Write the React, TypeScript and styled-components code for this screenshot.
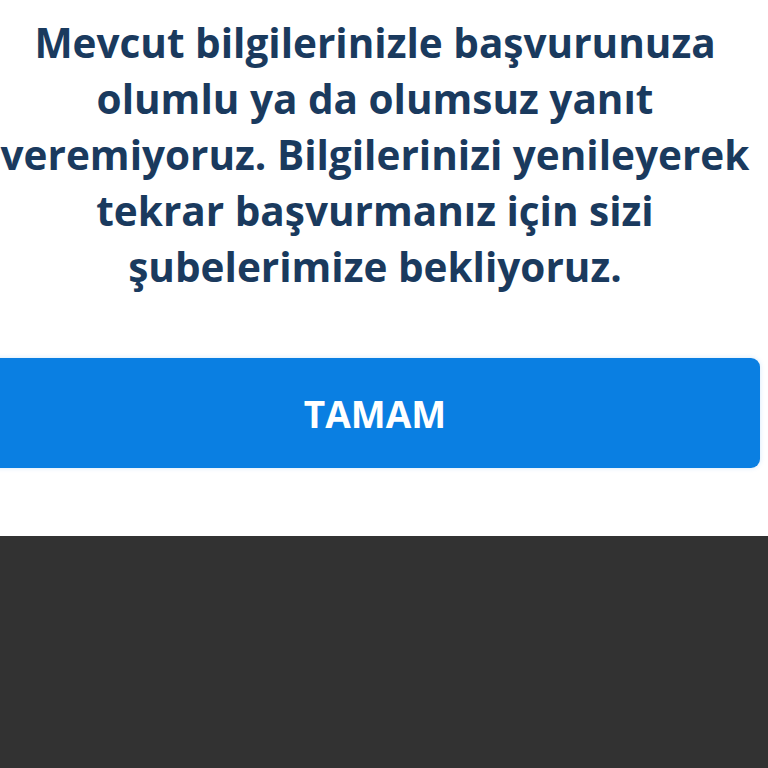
import React from 'react';
import styled, {createGlobalStyle} from "styled-components";

const GlobalStyle = createGlobalStyle`
    html, body {
        margin: 0;
        padding: 0;
        background: #ffffff;
        overflow: hidden;
    }
`

const lines = [
    "Mevcut bilgilerinizle başvurunuza",
    "olumlu ya da olumsuz yanıt",
    "veremiyoruz. Bilgilerinizi yenileyerek",
    "tekrar başvurmanız için sizi",
    "şubelerimize bekliyoruz.",
]

export default function App() {
    return (
        <>
            <GlobalStyle/>
            <Page>
                <Dialog>
                    <Message>
                        {lines.map((line, i) => (
                            <Line key={i}>{line}</Line>
                        ))}
                    </Message>
                    <OkButton type="button">TAMAM</OkButton>
                </Dialog>
                <Backdrop/>
            </Page>
        </>
    );
}

const Page = styled.div`
    width: 768px;
    height: 768px;
    display: flex;
    flex-direction: column;
    overflow: hidden;
`

const Dialog = styled.div`
    width: 770px;
    margin-left: -10px;
    height: 536px;
    background: #ffffff;
    display: flex;
    flex-direction: column;
    align-items: center;
    padding-top: 15px;
    box-sizing: border-box;
`

const Message = styled.p`
    margin: 0;
    font-family: "Open Sans", "Noto Sans", sans-serif;
    font-weight: 700;
    font-size: 40.5px;
    line-height: 56px;
    color: #1a3a5e;
    text-align: center;
    white-space: nowrap;
`

const Line = styled.span`
    display: block;
`

const OkButton = styled.button`
    margin-top: 63px;
    width: 770px;
    height: 110px;
    border: none;
    border-radius: 9px;
    background: #0a7fe2;
    box-shadow: 0 0 5px rgba(10, 127, 226, 0.18);
    color: #ffffff;
    font-family: "Open Sans", "Noto Sans", sans-serif;
    font-weight: 700;
    font-size: 37px;
    letter-spacing: 0;
    cursor: pointer;
`

const Backdrop = styled.div`
    flex: 1;
    background: #323232;
`
